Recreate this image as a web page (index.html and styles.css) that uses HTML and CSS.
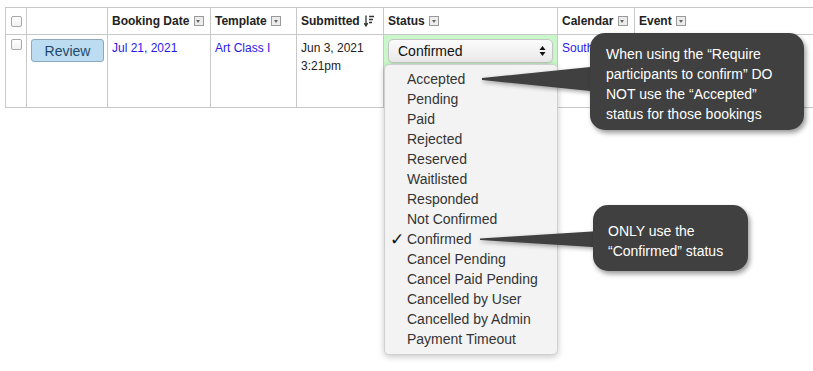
FILE: index.html
```html
<!DOCTYPE html>
<html lang="en">
<head>
    <meta charset="UTF-8">
    <meta name="viewport" content="width=device-width, initial-scale=1.0">
    <title>Bookings</title>
    <link rel="stylesheet" href="styles.css">
</head>
<body>
    <div class="sheet">
        <table class="bookings">
            <colgroup>
                <col class="col-check">
                <col class="col-action">
                <col class="col-date">
                <col class="col-template">
                <col class="col-submitted">
                <col class="col-status">
                <col class="col-calendar">
                <col class="col-event">
            </colgroup>
            <thead>
                <tr>
                    <th class="cell-check"><span class="checkbox"></span></th>
                    <th></th>
                    <th>Booking Date <span class="filter-icon"></span></th>
                    <th>Template <span class="filter-icon"></span></th>
                    <th>Submitted
                        <svg class="sort-icon" width="10" height="12" viewBox="0 0 10 12">
                            <path d="M2 0.5V10.5M0.3 8.2L2 11L3.7 8.2" fill="none" stroke="#333" stroke-width="1.3"/>
                            <path d="M5 1.5H10M5 4.5H9M5 7.5H8" fill="none" stroke="#333" stroke-width="1.3"/>
                        </svg>
                    </th>
                    <th>Status <span class="filter-icon"></span></th>
                    <th>Calendar <span class="filter-icon"></span></th>
                    <th>Event <span class="filter-icon"></span></th>
                </tr>
            </thead>
            <tbody>
                <tr>
                    <td class="cell-check"><span class="checkbox"></span></td>
                    <td class="cell-action"><button class="review-button">Review</button></td>
                    <td><a href="#">Jul 21, 2021</a></td>
                    <td><a href="#">Art Class I</a></td>
                    <td>Jun 3, 2021<br>3:21pm</td>
                    <td class="cell-status">
                        <div class="status-select">
                            <span>Confirmed</span>
                            <svg width="7" height="12" viewBox="0 0 7 12">
                                <path d="M3.5 1L6.5 5H0.5Z M3.5 11L6.5 7H0.5Z" fill="#111"/>
                            </svg>
                        </div>
                    </td>
                    <td><a href="#">South</a></td>
                    <td></td>
                </tr>
            </tbody>
        </table>

        <ul class="status-menu">
            <li>Accepted</li>
            <li>Pending</li>
            <li>Paid</li>
            <li>Rejected</li>
            <li>Reserved</li>
            <li>Waitlisted</li>
            <li>Responded</li>
            <li>Not Confirmed</li>
            <li class="selected">Confirmed</li>
            <li>Cancel Pending</li>
            <li>Cancel Paid Pending</li>
            <li>Cancelled by User</li>
            <li>Cancelled by Admin</li>
            <li>Payment Timeout</li>
        </ul>

        <svg class="pointers" width="813" height="371" viewBox="0 0 813 371">
            <polygon points="482,78 482,80 600,92 600,66" fill="#404040"/>
            <polygon points="480,238.5 480,240 600,247.5 600,231" fill="#404040"/>
        </svg>

        <div class="callout callout--accepted">
            When using the “Require participants to confirm” DO NOT use the “Accepted” status for those bookings
        </div>
        <div class="callout callout--confirmed">
            ONLY use the “Confirmed” status
        </div>
    </div>
</body>
</html>
```

FILE: styles.css
```css
* {
    margin: 0;
    padding: 0;
    box-sizing: border-box;
}

html, body {
    overflow: hidden;
}

body {
    background: #ffffff;
    font-family: "Liberation Sans", Arial, sans-serif;
    font-size: 12px;
    color: #222;
}

.sheet {
    position: relative;
    width: 813px;
    height: 371px;
    padding: 7px 0 0 5px;
}

.bookings {
    border-collapse: collapse;
    table-layout: fixed;
    width: 900px;
}

.col-check { width: 21px; }
.col-action { width: 81px; }
.col-date { width: 103px; }
.col-template { width: 86px; }
.col-submitted { width: 87px; }
.col-status { width: 174px; }
.col-calendar { width: 77px; }
.col-event { width: 271px; }

.bookings th,
.bookings td {
    border: 1px solid #c8c8c8;
    text-align: left;
    vertical-align: top;
    white-space: nowrap;
    overflow: hidden;
}

.bookings th {
    height: 27px;
    padding: 0 4px;
    font-weight: bold;
    vertical-align: middle;
    color: #222;
}

.bookings td {
    height: 73px;
    padding: 4px 4px;
    line-height: 18px;
}

.bookings a {
    color: #2a18e8;
    text-decoration: none;
}

.bookings .cell-check {
    padding: 0 0 0 5px;
}

.bookings td.cell-check {
    padding-top: 4px;
}

.checkbox {
    display: block;
    width: 11px;
    height: 11px;
    border: 1px solid #a8a8a8;
    border-radius: 2px;
    background: linear-gradient(to bottom, #ffffff, #f0f0f0);
}

.bookings th .checkbox {
    margin-top: 1px;
}

.filter-icon {
    display: inline-block;
    position: relative;
    width: 10px;
    height: 10px;
    margin-left: 1px;
    border: 1px solid #9a9a9a;
    background: #ececec;
    vertical-align: -1px;
}

.filter-icon:after {
    content: '';
    position: absolute;
    left: 1.5px;
    top: 2.5px;
    border-left: 2.5px solid transparent;
    border-right: 2.5px solid transparent;
    border-top: 3px solid #666;
}

.sort-icon {
    vertical-align: -2px;
    margin-left: 1px;
}

.bookings td.cell-action {
    padding: 4px 0 0 4px;
}

.review-button {
    display: block;
    width: 73px;
    height: 23px;
    border: 1px solid #8ea8bb;
    border-radius: 3px;
    background: #bcdcf1;
    color: #1e4a6c;
    font-family: "Liberation Sans", Arial, sans-serif;
    font-size: 14px;
}

.bookings td.cell-status {
    background: #caf7ca;
    padding: 4px 4px 0 4px;
}

.status-select {
    display: flex;
    align-items: center;
    justify-content: space-between;
    width: 165px;
    height: 24px;
    padding: 0 6px 0 9px;
    border: 1px solid #c4c4c4;
    border-radius: 5px;
    background: linear-gradient(to bottom, #fbfbfb, #e9e9e9);
    box-shadow: 0 1px 1px rgba(0, 0, 0, 0.08);
    font-size: 14px;
    color: #111;
}

.status-menu {
    position: absolute;
    left: 384px;
    top: 64px;
    width: 174px;
    padding: 4px 0 5px;
    list-style: none;
    background: #f3f3f3;
    border: 1px solid #d0d0d0;
    border-radius: 5px;
    box-shadow: 0 2px 6px rgba(0, 0, 0, 0.22);
    font-size: 14px;
    color: #333;
}

.status-menu li {
    position: relative;
    height: 20px;
    line-height: 20px;
    padding-left: 22px;
}

.status-menu li.selected:before {
    content: '✓';
    position: absolute;
    left: 5px;
    top: 0;
    font-family: "DejaVu Sans", sans-serif;
    font-size: 17px;
    line-height: 20px;
    color: #111;
}

.pointers {
    position: absolute;
    left: 0;
    top: 0;
    filter: drop-shadow(1px 2px 2px rgba(0, 0, 0, 0.35));
}

.callout {
    position: absolute;
    background: #404040;
    color: #ffffff;
    border-radius: 15px;
    font-size: 14px;
    line-height: 20px;
    box-shadow: 2px 3px 5px rgba(0, 0, 0, 0.4);
}

.callout--accepted {
    left: 590px;
    top: 33px;
    width: 214px;
    height: 97px;
    padding: 11px 10px 0 16px;
}

.callout--confirmed {
    left: 593px;
    top: 205px;
    width: 155px;
    height: 66px;
    padding: 16px 10px 0 15px;
}
```
